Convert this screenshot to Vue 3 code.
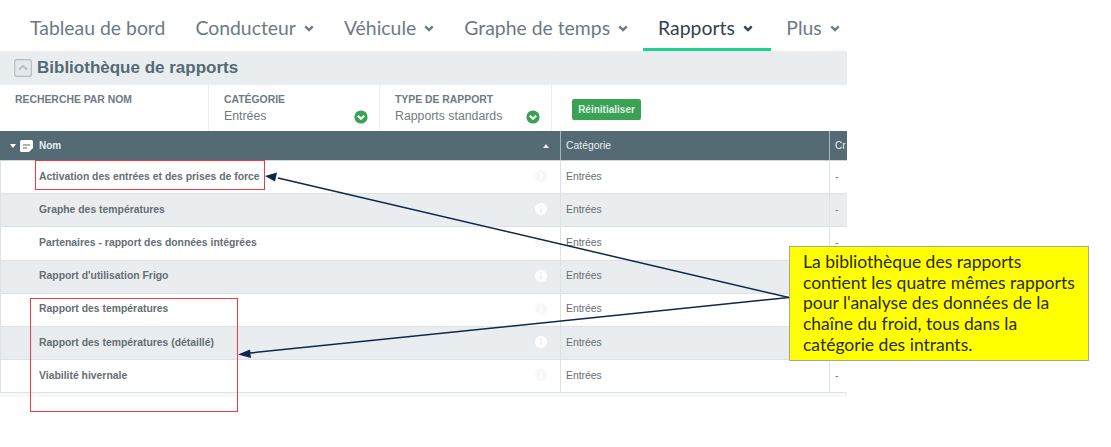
<script setup>
const navItems = [
  { label: 'Tableau de bord', caret: false },
  { label: 'Conducteur', caret: true },
  { label: 'Véhicule', caret: true },
  { label: 'Graphe de temps', caret: true },
  { label: 'Rapports', caret: true, active: true },
  { label: 'Plus', caret: true },
]
const rows = [
  { name: 'Activation des entrées et des prises de force', dash: true },
  { name: 'Graphe des températures', dash: true },
  { name: 'Partenaires - rapport des données intégrées', dash: true },
  { name: "Rapport d'utilisation Frigo", dash: false },
  { name: 'Rapport des températures', dash: false },
  { name: 'Rapport des températures (détaillé)', dash: false },
  { name: 'Viabilité hivernale', dash: true },
]
</script>

<template>
  <div class="page">
    <div class="app">
      <nav class="nav">
        <a v-for="n in navItems" :key="n.label" class="nav-item" :class="{ active: n.active }">
          <span>{{ n.label }}</span>
          <svg v-if="n.caret" class="chev" viewBox="0 0 10 7" width="10" height="7">
            <path d="M1.3 1.4 5 5 8.700 1.4" fill="none" stroke="currentColor" stroke-width="2.400" />
          </svg>
        </a>
      </nav>

      <div class="title-bar">
        <span class="collapse">
          <svg viewBox="0 0 18 18" width="18" height="18">
            <rect x=".7" y=".7" width="16.6" height="16.6" rx="2" fill="#e3e8ea" stroke="#b4bec3" stroke-width="1.2" />
            <path d="M5 10.5 9 7l4 3.5" fill="none" stroke="#b4bec3" stroke-width="2" />
          </svg>
        </span>
        <h1>Bibliothèque de rapports</h1>
      </div>

      <div class="filters">
        <div class="filter f-name"><label>RECHERCHE PAR NOM</label></div>
        <div class="filter f-cat">
          <label>CATÉGORIE</label>
          <div class="value"><span>Entrées</span>
            <svg class="check" viewBox="0 0 14 14" width="14" height="14"><circle cx="7" cy="7" r="6.6" fill="#3aa254" /><path d="M3.8 5.8 7 8.8l3.2-3" fill="none" stroke="#fff" stroke-width="2.2" /></svg>
          </div>
        </div>
        <div class="filter f-type">
          <label>TYPE DE RAPPORT</label>
          <div class="value"><span>Rapports standards</span>
            <svg class="check" viewBox="0 0 14 14" width="14" height="14"><circle cx="7" cy="7" r="6.6" fill="#3aa254" /><path d="M3.8 5.8 7 8.8l3.2-3" fill="none" stroke="#fff" stroke-width="2.2" /></svg>
          </div>
        </div>
        <div class="reset-wrap"><button class="reset">Réinitialiser</button></div>
      </div>

      <div class="thead">
        <div class="th c-name">
          <span class="tri-down"></span>
          <svg class="note" viewBox="0 0 13 12" width="13" height="12"><path d="M1.5 0h10A1.5 1.5 0 0 1 13 1.500V8l-4 4H1.500A1.500 1.500 0 0 1 0 10.500v-9A1.500 1.500 0 0 1 1.500 0Z" fill="#fff" /><path d="M3 5h7M3 8h4" stroke="#546a75" stroke-width="1.200" /></svg>
          <span class="nom">Nom</span>
          <span class="tri-up"></span>
        </div>
        <div class="th c-cat">Catégorie</div>
        <div class="th c-rest">Cr</div>
      </div>

      <div v-for="(r, i) in rows" :key="r.name" class="row" :class="{ even: i % 2 === 1 }">
        <div class="td c-name">
          <span class="rname">{{ r.name }}</span>
          <svg class="info" viewBox="0 0 12 12" width="12" height="12">
            <circle cx="6" cy="6" r="6" class="info-bg" />
            <path d="M6 2.500v1.500M6 5.200v4.300" class="info-fg" stroke-width="1.700" />
          </svg>
        </div>
        <div class="td c-cat">Entrées</div>
        <div class="td c-rest"><template v-if="r.dash">-</template></div>
      </div>
      <div class="tail"></div>
    </div>

    <div class="red r1"></div>
    <div class="red r2"></div>

    <svg class="arrows" viewBox="0 0 1111 447" width="1111" height="447">
      <path d="M789 297.500 278 178" stroke="#0f2748" stroke-width="1.500" fill="none" />
      <path d="M265 176 277 172.500 275 181.500Z" fill="#0f2748" />
      <path d="M789 297.500 250 353" stroke="#0f2748" stroke-width="1.500" fill="none" />
      <path d="M238 354.500 250 349.500 251 358Z" fill="#0f2748" />
    </svg>

    <div class="callout">La bibliothèque des rapports contient les quatre mêmes rapports pour l'analyse des données de la chaîne du froid, tous dans la catégorie des intrants.</div>
  </div>
</template>

<style>
html, body { margin: 0; background: #fff; }
</style>

<style scoped>
.page {
  position: relative;
  width: 1111px;
  height: 447px;
  overflow: hidden;
  background: #fff;
}
.app {
  width: 847px;
  overflow: hidden;
  font-family: "Liberation Sans", Arial, sans-serif;
}
.nav {
  display: flex;
  height: 51px;
  padding-left: 14px;
  box-sizing: border-box;
  font-family: Lato, sans-serif;
  font-size: 19.400px;
  color: #6c7a85;
}
.nav-item {
  display: flex;
  align-items: center;
  gap: 8px;
  padding: 3px 15px 0 15px;
  box-sizing: border-box;
  height: 51px;
  white-space: nowrap;
}
.nav-item:first-child { padding-left: 16px; }
.nav-item.active {
  color: #33424e;
  padding-right: 18.500px;
  box-shadow: inset 0 -3px 0 #1fd08f;
}
.chev { flex: none; margin-top: 2px; }
.title-bar {
  display: flex;
  align-items: center;
  height: 34px;
  background: #e9edf0;
  padding-left: 14px;
  gap: 5px;
}
.collapse { display: flex; }
.title-bar h1 {
  margin: 0;
  font-size: 17px;
  font-weight: 700;
  color: #546a75;
}
.filters {
  display: flex;
  height: 46px;
  color: #6b7780;
}
.filter {
  box-sizing: border-box;
  border-right: 1px solid #eef0f2;
  padding-top: 9px;
}
.filter label {
  display: block;
  font-size: 10.400px;
  font-weight: 700;
  line-height: 12px;
  color: #6f7a82;
}
.f-name { width: 209px; padding-left: 15px; }
.f-cat { width: 171px; padding-left: 15px; padding-right: 11px; }
.f-type { width: 172px; padding-left: 15px; padding-right: 11px; }
.value {
  display: flex;
  justify-content: space-between;
  align-items: center;
  font-size: 12.300px;
  line-height: 15px;
  margin-top: 3px;
  color: #717b83;
}
.reset-wrap { padding: 14px 0 0 20px; }
.reset {
  display: block;
  width: 69px;
  height: 21px;
  padding: 0;
  border: 0;
  border-radius: 2px;
  background: #3aa254;
  color: #dff0e3;
  font-family: inherit;
  font-size: 10px;
  font-weight: 700;
}
.thead {
  display: flex;
  height: 30px;
  background: #546a75;
  color: #e8edef;
  font-size: 10px;
  border-bottom: 1px solid #cfd6da;
  box-sizing: border-box;
}
.th {
  display: flex;
  align-items: center;
  box-sizing: border-box;
}
.c-name { width: 561px; flex: none; box-sizing: border-box; }
.c-cat { width: 269px; flex: none; box-sizing: border-box; padding-left: 5px; border-left: 0; }
.c-rest { flex: 1; box-sizing: border-box; padding-left: 5px; }
.thead .c-name { padding-left: 10px; border-right: 1px solid #a9b5bb; padding-right: 11px; }
.thead .c-cat { border-right: 1px solid #a9b5bb; font-weight: 400; font-size: 10.400px; }
.tri-down {
  width: 0; height: 0;
  border-left: 3px solid transparent;
  border-right: 3px solid transparent;
  border-top: 4px solid #fff;
}
.note { margin-left: 4px; }
.nom { margin-left: 6px; font-weight: 700; }
.tri-up {
  width: 0; height: 0;
  margin-left: auto;
  border-left: 3px solid transparent;
  border-right: 3px solid transparent;
  border-bottom: 4px solid #e8edef;
}
.row {
  display: flex;
  height: 33.200px;
  box-sizing: border-box;
  border-bottom: 1px solid #dde2e6;
  color: #666e74;
  font-size: 10.400px;
  background: #fff;
}
.row.even { background: #e9edf0; }
.td {
  display: flex;
  align-items: center;
  padding-bottom: 2px;
}
.row .c-name {
  padding-left: 38px;
  padding-right: 13px;
  justify-content: space-between;
  border-left: 1px solid #dde2e6;
  border-right: 1px solid #dde2e6;
}
.row .c-cat { border-right: 1px solid #dde2e6; }
.rname { font-weight: 700; font-size: 10.400px; }
.info { flex: none; }
.info-bg { fill: #f6f7f8; }
.info-fg { stroke: #fff; }
.even .info-bg { fill: #fff; }
.even .info-fg { stroke: #e9edf0; }
.tail { height: 4px; background: #f7f8f9; }
.red {
  position: absolute;
  box-sizing: border-box;
  border: 1.500px solid #f03a3e;
  pointer-events: none;
}
.r1 { left: 35px; top: 160px; width: 230px; height: 30px; }
.r2 { left: 30px; top: 298px; width: 208px; height: 114px; }
.arrows { position: absolute; left: 0; top: 0; pointer-events: none; }
.callout {
  position: absolute;
  left: 789px;
  top: 246px;
  width: 300px;
  height: 115px;
  box-sizing: border-box;
  border: 1px solid #a8a88f;
  background: #ffff00;
  padding: 5px 10px 0 13px;
  font-family: Lato, sans-serif;
  font-size: 17.500px;
  line-height: 20.700px;
  color: #2b2b10;
}
</style>
